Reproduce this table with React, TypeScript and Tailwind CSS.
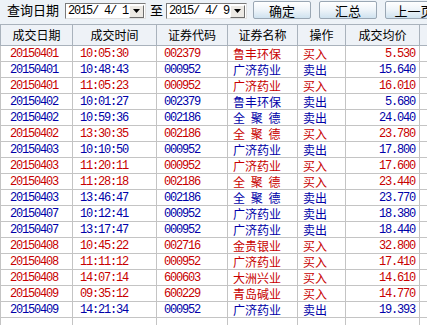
import React from "react";

type Row = [string, string, string, string, string, string];

const rows: Row[] = [
  ["20150401", "10:05:30", "002379", "鲁丰环保", "买入", "5.530"],
  ["20150401", "10:48:43", "000952", "广济药业", "卖出", "15.640"],
  ["20150401", "11:05:23", "000952", "广济药业", "买入", "16.010"],
  ["20150402", "10:01:27", "002379", "鲁丰环保", "卖出", "5.680"],
  ["20150402", "10:59:36", "002186", "全 聚 德", "卖出", "24.040"],
  ["20150402", "13:30:35", "002186", "全 聚 德", "买入", "23.780"],
  ["20150403", "10:10:50", "000952", "广济药业", "卖出", "17.800"],
  ["20150403", "11:20:11", "000952", "广济药业", "买入", "17.600"],
  ["20150403", "11:28:18", "002186", "全 聚 德", "买入", "23.440"],
  ["20150403", "13:46:47", "002186", "全 聚 德", "卖出", "23.770"],
  ["20150407", "10:12:41", "000952", "广济药业", "卖出", "18.380"],
  ["20150407", "13:17:47", "000952", "广济药业", "卖出", "18.440"],
  ["20150408", "10:45:22", "002716", "金贵银业", "买入", "32.800"],
  ["20150408", "11:11:12", "000952", "广济药业", "买入", "17.410"],
  ["20150408", "14:07:14", "600603", "大洲兴业", "买入", "14.610"],
  ["20150409", "09:35:12", "600229", "青岛碱业", "买入", "14.770"],
  ["20150409", "14:21:34", "000952", "广济药业", "卖出", "19.393"],
];

const cjk = "font-['Noto_Sans_CJK_SC',sans-serif]";
const mono = "font-['Liberation_Mono',monospace] text-[12px] tracking-[-1.2px]";

function DateBox({ value }: { value: string }) {
  return (
    <div className="flex h-[16px] w-[81px] shrink-0 items-center border border-t-[#7a7a7a] border-l-[#7a7a7a] border-b-[#e0e0e0] border-r-[#e0e0e0] bg-white">
      <span className={`${mono} flex-1 whitespace-pre pl-[2px] text-black`}>{value}</span>
      <div className="mr-[1px] flex h-[13px] w-[15px] items-center justify-center border border-t-white border-l-white border-b-[#6e6e6e] border-r-[#6e6e6e] bg-[#ece9e4]">
        <svg width="7" height="4" viewBox="0 0 7 4">
          <path d="M0 0h7L3.5 4z" fill="#000" />
        </svg>
      </div>
    </div>
  );
}

function Btn({ label }: { label: string }) {
  return (
    <div
      className={`${cjk} flex h-[18px] w-[58px] shrink-0 items-center justify-center whitespace-nowrap rounded-[2px] border border-[#9aa7b4] bg-gradient-to-b from-white via-[#eef4f9] to-[#cfe2ef] text-[13px] leading-none text-black`}
    >
      {label}
    </div>
  );
}

const widths = ["w-[72px]", "w-[84px]", "w-[71px]", "w-[70px]", "w-[48px]", "w-[74px]"];
const heads = ["成交日期", "成交时间", "证券代码", "证券名称", "操作", "成交均价"];

export default function App() {
  return (
    <div className="h-[325px] w-[427px] overflow-hidden bg-white">
      {/* toolbar */}
      <div className={`${cjk} flex h-[24px] items-start overflow-hidden whitespace-nowrap bg-[#edf2f7] pt-[1px] text-[12px] text-black`}>
        <span className="ml-[7px] mt-[1px] w-[58px] shrink-0 text-[13px] leading-[16px]">查询日期</span>
        <div className="mt-[2px] shrink-0">
          <DateBox value="2015/ 4/ 1" />
        </div>
        <span className="ml-[4px] mt-[1px] w-[16px] shrink-0 text-[13px] leading-[16px]">至</span>
        <div className="mt-[2px] shrink-0">
          <DateBox value="2015/ 4/ 9" />
        </div>
        <div className="ml-[6px] flex shrink-0 gap-[8px]">
          <Btn label="确定" />
          <Btn label="汇总" />
          <Btn label="上一页" />
        </div>
      </div>

      {/* header */}
      <div className={`${cjk} flex h-[22px] border-y border-[#a9b2bc] bg-[#eef2f7] text-[12px] text-black`}>
        <div className="w-[1px] bg-[#a9b2bc]" />
        {heads.map((h, i) => (
          <div key={h} className={`${widths[i]} flex items-center justify-center border-r border-[#a9b2bc]`}>
            {h}
          </div>
        ))}
        <div className="flex-1" />
      </div>

      {/* rows */}
      <div className="flex flex-col">
        {[...rows, null].map((r, idx) => {
          const color = r && r[4] === "买入" ? "text-[#c80000]" : "text-[#0000a8]";
          return (
            <div key={idx} className={`flex h-[16px] ${r ? "border-b" : ""} border-[#c4c4c4] ${color}`}>
              <div className="w-[1px] bg-[#c4c4c4]" />
              <div className={`${widths[0]} ${mono} flex items-center border-r border-[#c4c4c4] pl-[9px]`}>{r?.[0]}</div>
              <div className={`${widths[1]} ${mono} flex items-center border-r border-[#c4c4c4] pl-[7px]`}>{r?.[1]}</div>
              <div className={`${widths[2]} ${mono} flex items-center border-r border-[#c4c4c4] pl-[7px]`}>{r?.[2]}</div>
              <div className={`${widths[3]} ${cjk} flex items-center whitespace-pre border-r border-[#c4c4c4] pl-[5px] text-[12px] [word-spacing:3px]`}>{r?.[3]}</div>
              <div className={`${widths[4]} ${cjk} flex items-center border-r border-[#c4c4c4] pl-[5px] text-[12px]`}>{r?.[4]}</div>
              <div className={`${widths[5]} ${mono} flex items-center justify-end border-r border-[#c4c4c4] pr-[4px]`}>{r?.[5]}</div>
            </div>
          );
        })}
      </div>
    </div>
  );
}
